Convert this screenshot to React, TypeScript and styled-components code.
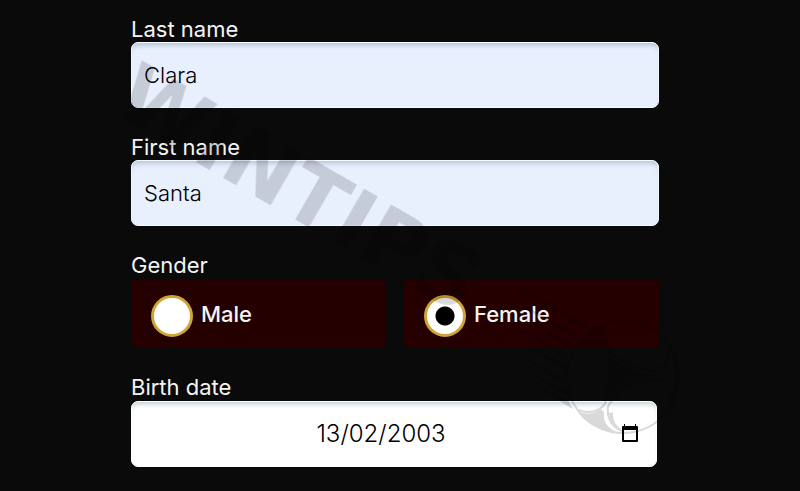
import React from 'react';
import styled, { createGlobalStyle } from 'styled-components';

const GlobalStyle = createGlobalStyle`
  *, *::before, *::after { box-sizing: border-box; }
  body { margin: 0; background: #0a0a0a; color: #f4f4f4; font-family: Inter, sans-serif; }
`;

const Page = styled.main`
  position: relative;
  padding: 16px 16% 24px;
  overflow: hidden;
`;

const Form = styled.form`
  display: flex;
  flex-direction: column;
  gap: 26px;
  margin: 0 13px 0 3px;
`;

const Field = styled.div`
  display: flex;
  flex-direction: column;
`;

const Label = styled.label`
  font-size: 22px;
  line-height: 26px;
`;

const TextInput = styled.input`
  width: 100%;
  height: 66px;
  padding: 0 12px;
  border: 1px solid #f7faff;
  border-radius: 7px;
  background: #e8effd;
  box-shadow: inset 0 5px 5px -3px #aebfd0;
  color: #000;
  font: 300 22px/26px Inter, sans-serif;
  outline: none;
`;

const DateBox = styled.div`
  display: grid;
  grid-template-columns: 1fr 26px;
  align-items: center;
  height: 66px;
  margin: 1px 2px 0 0;
  padding: 0 13px;
  border: 1px solid #fff;
  border-radius: 7px;
  background: #fff;
  box-shadow: inset 0 5px 5px -3px #c3ccd0;
`;

const DateInput = styled.input`
  min-width: 0;
  padding: 0;
  border: 0;
  background: none;
  color: #000;
  font: 300 24px/28px Inter, sans-serif;
  text-align: center;
  outline: none;
`;

const PickerButton = styled.button`
  display: flex;
  justify-content: center;
  padding: 0;
  border: 0;
  background: none;
`;

const Group = styled.fieldset`
  min-width: 0;
  margin: 0;
  padding: 0;
  border: 0;
`;

const Legend = styled.legend`
  padding: 0;
  font-size: 22px;
  line-height: 26px;
`;

const Choices = styled.div`
  display: grid;
  grid-template-columns: 1fr 1fr;
  gap: 18px;
  margin-top: 1px;
`;

const Choice = styled.label`
  display: flex;
  align-items: center;
  gap: 8px;
  height: 69px;
  padding: 0 20px;
  border-radius: 5px;
  background: #240000;
  font-size: 22px;
  font-weight: 500;
  line-height: 26px;
`;

const Radio = styled.input`
  appearance: none;
  flex: none;
  width: 42px;
  height: 42px;
  margin: 4px 0 0;
  border: 3px solid #d0a336;
  border-radius: 50%;
  background: #fff;
  &:checked { background: radial-gradient(circle, #000 9px, #fff 10px); }
`;

const Watermark = styled.svg`
  position: absolute;
  top: 0;
  left: 50%;
  width: 800px;
  height: 491px;
  margin-left: -400px;
  pointer-events: none;
`;

const WatermarkText = styled.text`
  font: 700 84px "DejaVu Sans", sans-serif;
  font-kerning: none;
`;

export default function App() {
  return (
    <>
      <GlobalStyle />
      <Page>
        <Form>
          <Field>
            <Label htmlFor="last">Last name</Label>
            <TextInput id="last" defaultValue="Clara" />
          </Field>
          <Field>
            <Label htmlFor="first">First name</Label>
            <TextInput id="first" defaultValue="Santa" />
          </Field>
          <Group>
            <Legend>Gender</Legend>
            <Choices>
              <Choice><Radio type="radio" name="gender" />Male</Choice>
              <Choice><Radio type="radio" name="gender" defaultChecked />Female</Choice>
            </Choices>
          </Group>
          <Field>
            <Label htmlFor="birth">Birth date</Label>
            <DateBox>
              <DateInput id="birth" defaultValue="13/02/2003" />
              <PickerButton type="button" aria-label="Open calendar">
                <svg width="18" height="20" viewBox="0 0 18 20">
                  <path d="M3 0h1v2h10V0h1v2h1q1 0 1 1v14q0 1-1 1H2q-1 0-1-1V3q0-1 1-1h1zM3 6v10h12V6z" fillRule="evenodd" />
                </svg>
              </PickerButton>
            </DateBox>
          </Field>
        </Form>
        <Watermark viewBox="0 0 800 491" aria-hidden="true">
          <g opacity=".15">
            <WatermarkText transform="translate(109 112) rotate(30)">WINTIPS</WatermarkText>
            <g fill="none" stroke="#000" strokeWidth="2">
              <circle cx="623" cy="377" r="56" />
              <path d="M604 326Q614 369 605 404M608 350Q627 368 653 371Q675 363 668 342M608 406Q626 380 653 379Q675 382 670 400M605 404Q595 416 578 410M608 406Q606 424 622 431" />
            </g>
            <path d="M607 355Q624 372 652 374V376Q626 377 608 401Q613 377 607 355ZM575 351Q585 325 604 325L605 347Q590 340 575 351ZM577 411Q590 417 601 409L604 412Q602 426 617 432Q590 430 577 411ZM609 413L613 412Q612 426 626 432Q611 429 609 413ZM673 352Q686 379 670 407Q677 379 673 352Z" />
            <path d="M520 287L588 325L583 329L520 290ZM512 300L580 334L576 339ZM524 317L573 344L570 350ZM515 326L568 354L567 360ZM525 344L566 365L565 371ZM510 350L565 378L565 384ZM520 368L566 390L568 396ZM530 384L568 400L573 409Z" />
          </g>
        </Watermark>
      </Page>
    </>
  );
}
